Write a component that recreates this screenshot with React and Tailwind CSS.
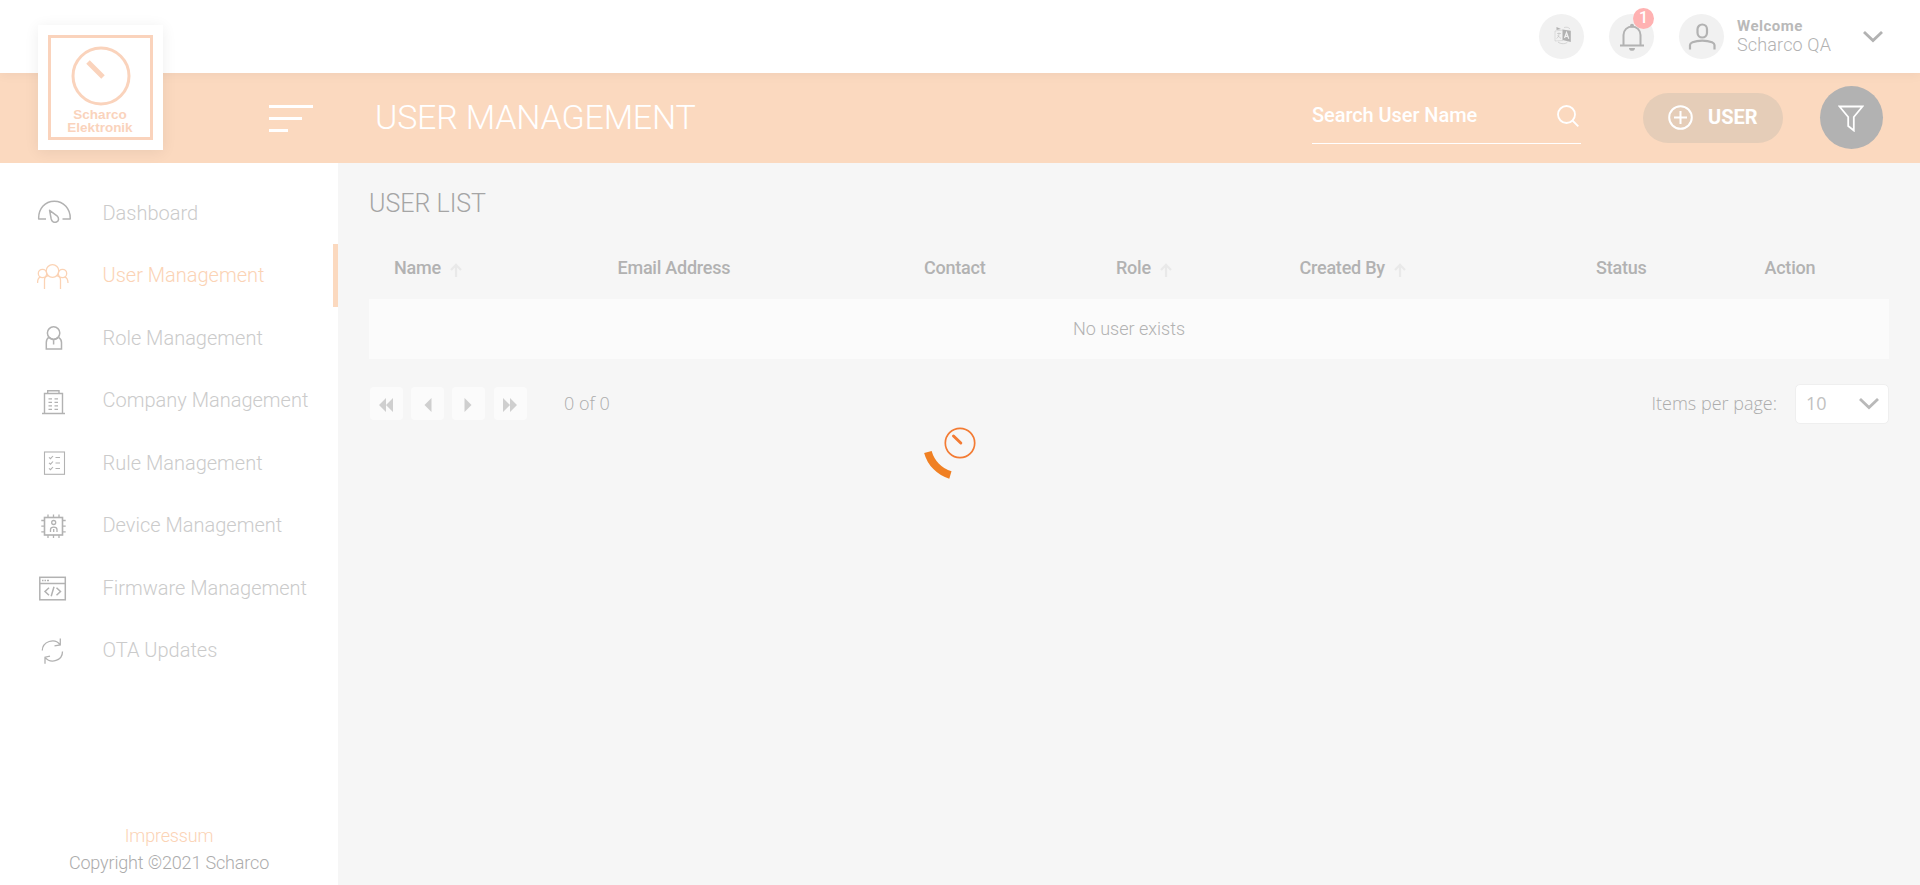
function Dial({ size, ring, hand, className }) {
  return (
    <svg width={size} height={size} viewBox="0 0 60 60" fill="none" stroke="currentColor" className={className}>
      <circle cx="30" cy="30" r="28" strokeWidth={ring} />
      <path d="M17 16L32 31" strokeWidth={hand} />
    </svg>
  );
}

const stroke = { fill: "none", stroke: "currentColor", strokeWidth: 1.3 };

const icons = {
  dashboard: (
    <svg width="34" height="34" viewBox="0 0 34 34" {...stroke} strokeLinejoin="round">
      <path d="M9 22H1.700C1.200 12 8 4.200 17.300 4.200S33.600 12 33.200 22H25.500" strokeWidth="1.500" />
      <path d="M12.600 13.300L20 18.800C22.300 21 22 24 19.500 25C17 26 14.800 24.500 14.200 22Z" strokeWidth="1.500" />
    </svg>
  ),
  users: (
    <svg width="34" height="34" viewBox="0 0 34 34" {...stroke}>
      <circle cx="15.500" cy="11" r="6.300" />
      <circle cx="5.500" cy="13.500" r="4.200" />
      <circle cx="25.500" cy="13.500" r="4.200" />
      <path d="M7.500 29V20C7.500 17.500 9.500 15.800 11.500 15.500M19.500 15.500C21.500 15.800 23.500 17.500 23.500 20V29M.6 23C.5 19 1.500 17.500 3.500 16.800M27.500 16.800C30 17.500 31 19 31 23" />
    </svg>
  ),
  role: (
    <svg width="34" height="34" viewBox="0 0 34 34" {...stroke} strokeWidth="1.5">
      <circle cx="16.600" cy="11" r="6.200" />
      <path d="M11.800 15.300C10 16.500 9.300 18.500 9.300 20.500V27H24.500V20.500C24.500 18.500 23.500 16.500 21.600 15.300M12.500 16L16.600 18L21 16M16.600 18V22.500" />
    </svg>
  ),
  company: (
    <svg width="34" height="34" viewBox="0 0 34 34" {...stroke}>
      <path d="M7.500 28V8.500H25.500V28M10.700 8.500V5.700H22V8.500M5 28.500H28" strokeWidth="1.4" />
      <path d="M11.500 13.800H15M17.500 13.800H21M11.500 17.300H15M17.500 17.300H21M11.500 20.800H15M17.500 20.800H21M11.500 24.300H15M17.500 24.300H21" />
    </svg>
  ),
  rule: (
    <svg width="34" height="34" viewBox="0 0 34 34" {...stroke} strokeWidth="1.1">
      <rect x="7.500" y="5" width="20" height="22.300" />
      <path d="M12 10.300L13.500 11.700L16 9M12 15.800L13.500 17.200L16 14.500M12 21.300L13.500 22.700L16 20M18.500 10.500H23M18.500 16H23M18.500 21.500H23" />
    </svg>
  ),
  device: (
    <svg width="34" height="34" viewBox="0 0 34 34" {...stroke}>
      <rect x="7.500" y="7.500" width="18" height="17.500" strokeWidth="1.600" />
      <path d="M11 7.500V4.500M16.500 7.500V4.500M22 7.500V4.500M11 28V25M16.500 28V25M22 28V25M4.300 10.500H7.500M4.300 16.200H7.500M4.300 21.800H7.500M25.500 10.500H28.700M25.500 16.200H28.700M25.500 21.800H28.700" />
      <circle cx="16.700" cy="12.500" r="2" />
      <path d="M13.500 22V19.500C13.500 16.300 20 16.300 20 19.500V22M16.700 22V19" />
    </svg>
  ),
  firmware: (
    <svg width="34" height="34" viewBox="0 0 34 34" {...stroke} strokeWidth="1.500">
      <rect x="2.800" y="5.300" width="25.500" height="22.500" />
      <path d="M3 11.500H28M5 8.500H6.500M7.500 8.500H9M10 8.500H12M12 15.800L8 19.500L12 23.300M19.500 15.800L23.500 19.500L19.500 23.300M17 14.800L14.200 24.300" />
    </svg>
  ),
  ota: (
    <svg width="34" height="34" viewBox="0 0 34 34" {...stroke}>
      <path d="M5.300 15.500C5.500 6.500 17.500 2.500 23 9.500M23.300 3.500V10L17.500 10.800M25.500 16.500C25.500 25.500 14 29.500 8 22.300M8 28.800V22.200L13 21.200" />
    </svg>
  ),
};

const nav = [
  ["dashboard", "Dashboard"],
  ["users", "User Management"],
  ["role", "Role Management"],
  ["company", "Company Management"],
  ["rule", "Rule Management"],
  ["device", "Device Management"],
  ["firmware", "Firmware Management"],
  ["ota", "OTA Updates"],
];

const columns = [
  ["Name", true],
  ["Email Address", false],
  ["Contact", false],
  ["Role", true],
  ["Created By", true],
  ["Status", false],
  ["Action", false],
];

function Chevron({ className }) {
  return (
    <svg width="20" height="12" viewBox="0 0 20 12" fill="none" stroke="currentColor" strokeWidth="2.800" className={className}>
      <path d="M1 1L10 9.500L19 1" />
    </svg>
  );
}

function Round({ children }) {
  return (
    <div className="relative flex size-[45px] items-center justify-center rounded-full bg-[#f1f1f1] text-[#b2b2b2]">
      {children}
    </div>
  );
}

function TopBar() {
  return (
    <header className="relative z-10 flex h-[73px] shrink-0 items-center justify-end bg-white pr-[37px] shadow-[0_3px_10px_rgba(0,0,0,0.04)]">
      <div className="flex gap-[25px]">
        <Round>
          <svg width="18" height="19" viewBox="0 0 18 19" fill="none" stroke="currentColor" strokeWidth="0.8" className="mb-[2px] ml-[2px]">
            <path d="M9 4L1 5V15L9 14.500" strokeOpacity="0.45" />
            <path d="M3 7.500H7M5 6.500V7.500C5 10 4 11.500 2.500 12.500M3.500 9.500L7 12.500M4 16C7 18.500 12 18 13.500 16" strokeOpacity="0.6" />
            <path d="M2.500 1L7 3L2.500 4Z" fill="currentColor" stroke="none" />
            <path d="M8.500 3.500L16.800 4.800V16L8.500 14Z" fill="currentColor" stroke="none" />
            <path d="M10.500 12L12.500 6.500L14.800 12.800M11.200 10.300H14" stroke="#f1f1f1" strokeWidth="1.200" />
            <path d="M10 1.500C13 .8 15 1.500 16 3" strokeOpacity="0.5" />
          </svg>
        </Round>
        <Round>
          <svg width="26" height="28" viewBox="0 0 26 28" fill="none" stroke="currentColor" strokeWidth="2" className="ml-px">
            <path d="M1 22.500H25M4.500 22.500V12C4.500 7 8.500 3.500 13 3.500S21.500 7 21.500 12V22.500" />
            <circle cx="13" cy="2.700" r="2" fill="currentColor" stroke="none" />
            <path d="M10 25H16C16 28.800 10 28.800 10 25Z" fill="currentColor" stroke="none" />
          </svg>
          <span className="absolute -top-[6px] right-0 flex size-[21px] items-center justify-center rounded-full bg-[#ffb2b2] pb-[2px] text-[16px] font-medium text-white">
            1
          </span>
        </Round>
        <Round>
          <svg width="28" height="27" viewBox="0 0 28 27" fill="none" stroke="currentColor" strokeWidth="2.200">
            <rect x="9.500" y="1.500" width="9.500" height="13" rx="4.750" />
            <path d="M2 26.500V22C2 20.500 3 20 4.500 19.300C10 17 18.500 17 24 19.300C25.500 20 26.500 20.500 26.500 22V26.500" />
          </svg>
        </Round>
      </div>
      <div className="ml-[13px] w-[126px] pb-[2px] text-[#b2b2b2]">
        <div className="text-[15px] leading-[18px] font-bold tracking-[0.5px] text-[#b9b9b9]">Welcome</div>
        <div className="text-[18px] leading-[20px] font-light tracking-[0.15px]">Scharco QA</div>
      </div>
      <Chevron className="text-[#b2b2b2]" />
    </header>
  );
}

function TitleBar() {
  return (
    <div className="flex h-[90px] shrink-0 items-center bg-[#fbd9bf] pr-[37px] pl-[269px] text-white">
      <div className="flex w-[44px] flex-col gap-[9px] pt-[1px]">
        <div className="h-[3px] w-[44px] bg-white" />
        <div className="h-[3px] w-[33px] bg-white" />
        <div className="h-[3px] w-[19px] bg-white" />
      </div>
      <h1 className="ml-[62px] pb-[2px] text-[34px] leading-[40px] font-light tracking-[-0.2px] whitespace-nowrap">USER MANAGEMENT</h1>
      <div className="mt-[14px] ml-auto flex h-[57px] w-[269px] items-center justify-between self-start border-b border-white pr-[2px]">
        <span className="text-[20px] font-medium tracking-[-0.07px]">Search User Name</span>
        <svg width="22" height="22" viewBox="0 0 22 22" fill="none" stroke="white" strokeWidth="1.800" className="mt-[2px]">
          <circle cx="9.500" cy="9.500" r="8.500" />
          <path d="M15.500 15.500L21.300 21.300" />
        </svg>
      </div>
      <div className="ml-[62px] flex h-[50px] w-[140px] items-center rounded-full bg-[#e5cdb8] pl-[25px]">
        <svg width="25" height="25" viewBox="0 0 25 25" fill="none" stroke="white" strokeWidth="2" className="mb-px">
          <circle cx="12.500" cy="12.500" r="11.300" />
          <path d="M6 12.500H19M12.500 6V19" />
        </svg>
        <span className="mb-[2px] ml-[15px] text-[20px] font-bold">USER</span>
      </div>
      <div className="mb-[1px] ml-[37px] flex size-[63px] items-center justify-center rounded-full bg-[#b2b2b2]">
        <svg width="26" height="27" viewBox="0 0 26 27" fill="none" stroke="white" strokeWidth="1.800" className="mt-px mr-px">
          <path d="M1.500 1.500H24.500L15.800 12V25.500L10.200 21V12Z" />
        </svg>
      </div>
    </div>
  );
}

function Sidebar() {
  return (
    <aside className="flex w-[338px] shrink-0 flex-col bg-white pt-[18.500px]">
      {nav.map(([icon, label]) => {
        const active = icon === "users";
        return (
          <div
            key={icon}
            className={
              active
                ? "flex h-[62.500px] items-center border-r-[5px] border-[#fbd9bf] pl-[37px] text-[#fbd3b5]"
                : "flex h-[62.500px] items-center pl-[37px] text-[#b2b2b2]"
            }
          >
            <span className="pt-[3px]">{icons[icon]}</span>
            <span
              className={
                active
                  ? "ml-[31.500px] text-[20px] font-light whitespace-nowrap"
                  : "ml-[31.500px] text-[20px] font-light whitespace-nowrap text-[#cbcbcb]"
              }
            >
              {label}
            </span>
          </div>
        );
      })}
      <footer className="mt-auto pb-[9px] text-center text-[18px] leading-[27px] font-light tracking-[-0.16px]">
        <div className="text-[#fbd3b5]">Impressum</div>
        <div className="text-[#acacac]">Copyright ©2021 Scharco</div>
      </footer>
    </aside>
  );
}

function PageButton({ d, className }) {
  return (
    <button className={`flex size-[33px] items-center justify-center rounded-[4px] bg-[#fbfbfb] text-[#cfcfcf] ${className}`}>
      <svg width="14" height="14" viewBox="0 0 14 14" fill="currentColor" className="mt-[3px] mr-px">
        <path d={d} />
      </svg>
    </button>
  );
}

function UserList() {
  return (
    <main className="flex-1 bg-[#f6f6f6] pr-[31px] pl-[31px]">
      <h2 className="mt-[25px] text-[25px] leading-[32px] font-light text-[#a5a5a5]">USER LIST</h2>
      <div className="mt-[17px] grid h-[62px] grid-cols-[223.5px_306.5px_192px_183.5px_296.5px_168.5px_1fr] items-center text-[18px] font-medium tracking-[-0.23px] text-[#b2b2b2]">
        {columns.map(([label, sortable]) => (
          <div key={label} className="flex items-center pb-[2px] pl-[25px] whitespace-nowrap">
            {label}
            {sortable && (
              <svg width="12" height="14" viewBox="0 0 12 14" fill="none" stroke="#e9e9e9" strokeWidth="2.200" className="mt-[6px] ml-[9px]">
                <path d="M6 14V2M1 7L6 1.800L11 7" />
              </svg>
            )}
          </div>
        ))}
      </div>
      <div className="flex h-[60px] items-center justify-center bg-[#fbfbfb] pb-[2px] text-[18px] font-light text-[#b2b2b2]">
        <span>No user exists</span>
      </div>
      <div className="mt-[23px] flex h-[42px] items-center pl-px font-['Open_Sans','Noto_Sans',sans-serif] text-[18px] font-light text-[#acacac]">
        <PageButton d="M7 0V14L0 7ZM14 0V14L7 7Z" className="" />
        <PageButton d="M11.500 0V14L4.500 7Z" className="ml-[8px]" />
        <PageButton d="M3.500 0V14L10.500 7Z" className="ml-[8px]" />
        <PageButton d="M0 0V14L7 7ZM7 0V14L14 7Z" className="ml-[9px]" />
        <span className="ml-[37px]">0 of 0</span>
        <span className="ml-auto">Items per page:</span>
        <div className="mt-px ml-[18px] flex h-[40px] w-[94px] items-center justify-between rounded-[5px] border border-[#efefef] bg-white pr-[9px] pb-px pl-[10px] font-normal text-[#c1c1c1]">
          10
          <Chevron className="mt-[2px] text-[#b9b9b9]" />
        </div>
      </div>
    </main>
  );
}

function Logo() {
  return (
    <div className="absolute top-[25px] left-[38px] z-20 size-[125px] bg-white p-[10px] shadow-[0_2px_14px_rgba(0,0,0,0.07)]">
      <div className="flex size-[105px] flex-col items-center border-[3px] border-[#fad3bc] pt-[8px] text-[#fad3bc]">
        <Dial size={60} ring={3} hand={5} />
        <div className="mt-[2px] pr-px text-center font-['Liberation_Sans',sans-serif] text-[13.500px] leading-[13px] font-bold">
          <div>Scharco</div>
          <div>Elektronik</div>
        </div>
      </div>
    </div>
  );
}

function Loader() {
  return (
    <svg width="80" height="80" viewBox="-40 -40 80 80" fill="none" className="absolute top-[402.500px] left-[919.500px] z-30">
      <circle r="14.700" stroke="#f37b33" strokeWidth="1.700" />
      <path d="M-6.500 -7L.8 0" stroke="#f37b33" strokeWidth="3" strokeLinecap="round" />
      <path d="M-32.100 8.900A33.200 33.200 0 0 0 -9.600 32" stroke="#f08023" strokeWidth="7.800" />
    </svg>
  );
}

export default function App() {
  return (
    <div className="relative flex h-[885px] w-[1920px] flex-col overflow-hidden bg-white font-['Roboto','Liberation_Sans',sans-serif]">
      <TopBar />
      <TitleBar />
      <div className="flex flex-1">
        <Sidebar />
        <UserList />
      </div>
      <Logo />
      <Loader />
    </div>
  );
}
